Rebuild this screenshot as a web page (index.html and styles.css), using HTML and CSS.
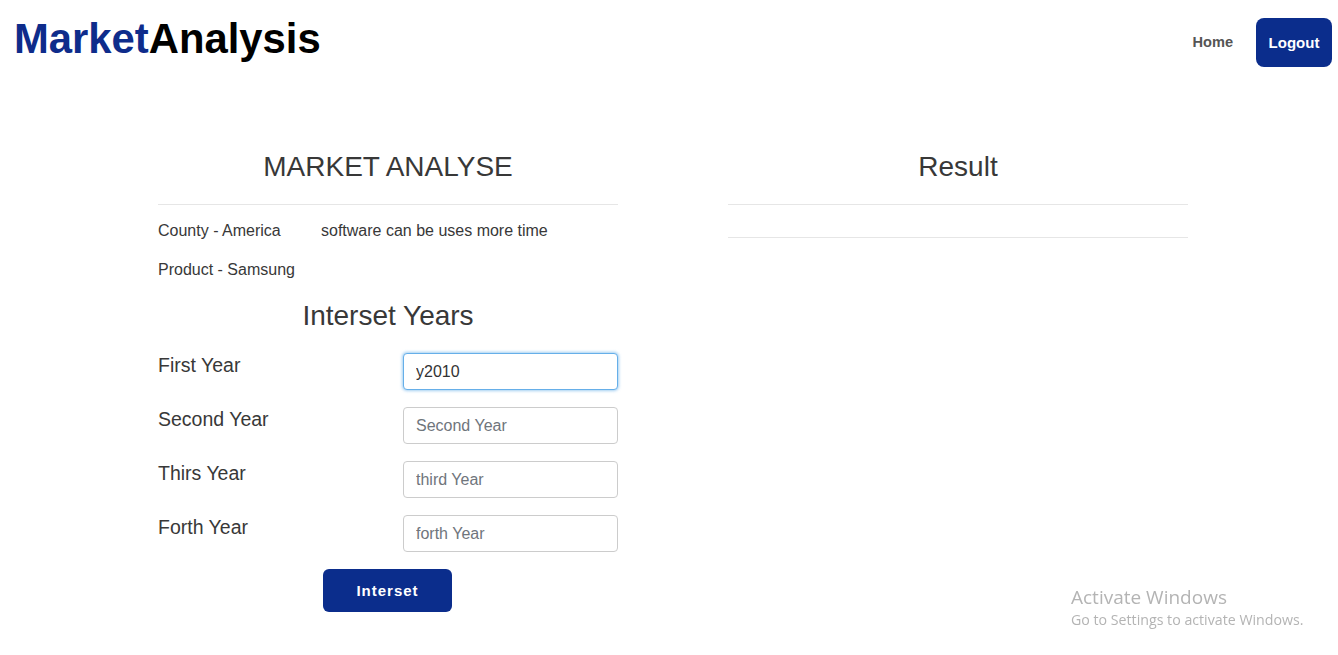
FILE: index.html
```html
<!DOCTYPE html>
<html lang="en">
<head>
<meta charset="utf-8">
<title>MarketAnalysis</title>
<link rel="stylesheet" href="styles.css">
</head>
<body>
<header class="topbar">
  <div class="logo"><span class="logo-blue">Market</span>Analysis</div>
  <nav class="nav">
    <a class="nav-link" href="#">Home</a>
    <a class="nav-btn" href="#">Logout</a>
  </nav>
</header>
<main class="main">
  <section class="col">
    <h2 class="col-title">MARKET ANALYSE</h2>
    <div class="info">
      <div class="info-row"><span class="info-key">County - America</span><span>software can be uses more time</span></div>
      <div class="info-row"><span>Product - Samsung</span></div>
    </div>
    <h3 class="sub-title">Interset Years</h3>
    <form class="year-form">
      <div class="form-row"><label class="form-label">First Year</label><input class="form-input focused" type="text" value="y2010"></div>
      <div class="form-row"><label class="form-label">Second Year</label><input class="form-input" type="text" placeholder="Second Year"></div>
      <div class="form-row"><label class="form-label">Thirs Year</label><input class="form-input" type="text" placeholder="third Year"></div>
      <div class="form-row"><label class="form-label">Forth Year</label><input class="form-input" type="text" placeholder="forth Year"></div>
      <div class="form-actions"><button class="submit-btn" type="button">Interset</button></div>
    </form>
  </section>
  <section class="col">
    <h2 class="col-title">Result</h2>
    <div class="result-body"></div>
  </section>
</main>
<div class="watermark">
  <div class="wm-title">Activate Windows</div>
  <div class="wm-sub">Go to Settings to activate Windows.</div>
</div>
</body>
</html>
```
FILE: styles.css
```css
* { box-sizing: border-box; }
html, body { margin: 0; padding: 0; background: #fff; }
body {
  font-family: "Liberation Sans", Arial, sans-serif;
  color: #383838;
  font-size: 16px;
}
.topbar {
  display: flex;
  justify-content: space-between;
  align-items: flex-start;
  height: 67px;
}
.logo {
  margin: 18px 0 0 14px;
  font-size: 41.8px;
  line-height: 42px;
  font-weight: bold;
  color: #000;
}
.logo-blue { color: #0e2c8b; }
.nav {
  display: flex;
  align-items: center;
  gap: 23px;
  margin: 18px 6px 0 0;
}
.nav-link {
  color: #555;
  font-weight: bold;
  font-size: 14.6px;
  text-decoration: none;
  margin-bottom: 1px;
}
.nav-btn {
  display: flex;
  align-items: center;
  justify-content: center;
  width: 76px;
  height: 49px;
  background: #0b2d8c;
  color: #fff;
  font-weight: bold;
  font-size: 15px;
  border-radius: 8px;
  text-decoration: none;
}
.main {
  display: flex;
  gap: 110px;
  padding: 86px 0 0 158px;
}
.col { width: 460px; }
.col-title {
  margin: 0;
  font-size: 28px;
  line-height: 28px;
  font-weight: normal;
  text-align: center;
  padding-bottom: 23px;
  border-bottom: 1px solid #e6e6e6;
}
.info { margin-top: 15px; }
.info-row {
  display: flex;
  line-height: 22px;
  margin-bottom: 17px;
}
.info-key { width: 163px; }
.info-row:last-child { margin-bottom: 0; }
.sub-title {
  margin: 19px 0 0;
  font-size: 28px;
  line-height: 31px;
  font-weight: normal;
  text-align: center;
}
.year-form { margin-top: 22px; }
.form-row {
  display: flex;
  justify-content: space-between;
  align-items: flex-start;
  margin-bottom: 17px;
}
.form-label {
  font-size: 19.5px;
  line-height: 21px;
  padding-top: 2px;
}
.form-input {
  width: 215px;
  height: 37px;
  padding: 0 12px;
  border: 1px solid #ccc;
  border-radius: 4px;
  font-family: "Liberation Sans", Arial, sans-serif;
  font-size: 16px;
  color: #333;
  outline: none;
}
.form-input::placeholder { color: #6f757c; }
.form-input.focused {
  border-color: #66afe9;
  box-shadow: 0 0 3px 1px rgba(102, 175, 233, 0.6);
}
.form-actions {
  display: flex;
  justify-content: center;
}
.submit-btn {
  width: 129px;
  height: 43px;
  margin-right: 1px;
  background: #0b2d8c;
  color: #fff;
  border: none;
  border-radius: 6px;
  font-family: "Liberation Sans", Arial, sans-serif;
  font-weight: bold;
  font-size: 15px;
  letter-spacing: 1px;
}
.result-body {
  height: 33px;
  border-bottom: 1px solid #e6e6e6;
}
.watermark {
  position: fixed;
  left: 1071px;
  top: 584px;
  color: #b4b4b4;
  font-family: "Open Sans", "Noto Sans", sans-serif;
  pointer-events: none;
}
.wm-title { font-size: 19px; line-height: 26px; }
.wm-sub { font-size: 14.2px; line-height: 20px; }
```
